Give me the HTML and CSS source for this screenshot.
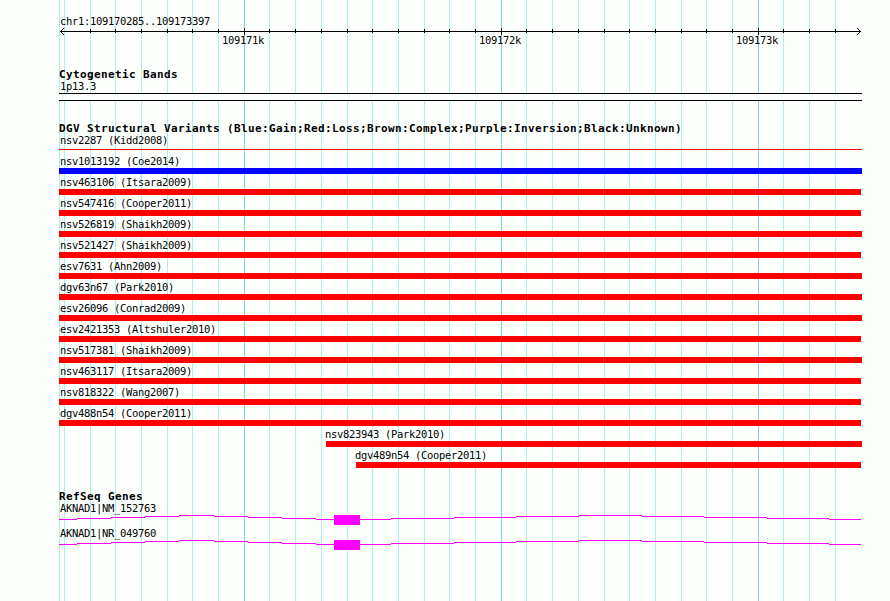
FILE: index.html
```
<!DOCTYPE html>
<html lang="en">
<head>
    <meta charset="UTF-8">
    <title>chr1:109170285..109173397</title>
    <link rel="stylesheet" href="styles.css">
</head>
<body>
    <div class="browser">
        <svg class="grid" width="890" height="601" shape-rendering="crispEdges">
            <path class="minor" d="M59.5 0v601M64.5 0v601M90.5 0v601M115.5 0v601M141.5 0v601M167.5 0v601M192.5 0v601M218.5 0v601M269.5 0v601M295.5 0v601M321.5 0v601M347.5 0v601M372.5 0v601M398.5 0v601M424.5 0v601M449.5 0v601M475.5 0v601M526.5 0v601M552.5 0v601M578.5 0v601M604.5 0v601M629.5 0v601M655.5 0v601M681.5 0v601M706.5 0v601M732.5 0v601M783.5 0v601M809.5 0v601M835.5 0v601"/>
            <path class="major" d="M244.5 0v601M501.5 0v601M758.5 0v601"/>
        </svg>

        <div class="tracks">
            <div class="ruler">
                <div class="label">chr1:109170285..109173397</div>
                <svg class="axis" width="803" height="7" viewBox="59 28 803 7" shape-rendering="crispEdges">
                    <path d="M60 31.5H861M90.5 29v4M115.5 29v4M141.5 29v4M167.5 29v4M192.5 29v4M218.5 29v4M269.5 29v4M295.5 29v4M321.5 29v4M347.5 29v4M372.5 29v4M398.5 29v4M424.5 29v4M449.5 29v4M475.5 29v4M526.5 29v4M552.5 29v4M578.5 29v4M604.5 29v4M629.5 29v4M655.5 29v4M681.5 29v4M706.5 29v4M732.5 29v4M783.5 29v4M809.5 29v4M835.5 29v4"/>
                    <path d="M244.5 28v7M501.5 28v7M758.5 28v7"/>
                    <path d="M61 30.5h1M62 29.5h1M63 28.5h1M61 32.5h1M62 33.5h1M63 34.5h1M859 30.5h1M858 29.5h1M857 28.5h1M859 32.5h1M858 33.5h1M857 34.5h1"/>
                </svg>
                <div class="ticks"><span>109171k</span><span>109172k</span><span>109173k</span></div>
            </div>

            <div class="bands">
                <h2>Cytogenetic Bands</h2>
                <div class="label">1p13.3</div>
                <div class="band"></div>
            </div>

            <div class="variants">
                <h2>DGV Structural Variants (Blue:Gain;Red:Loss;Brown:Complex;Purple:Inversion;Black:Unknown)</h2>
                <div class="row"><div class="label">nsv2287 (Kidd2008)</div><div class="bar thin"></div></div>
                <div class="row"><div class="label">nsv1013192 (Coe2014)</div><div class="bar gain"></div></div>
                <div class="row"><div class="label">nsv463106 (Itsara2009)</div><div class="bar short"></div></div>
                <div class="row"><div class="label">nsv547416 (Cooper2011)</div><div class="bar short"></div></div>
                <div class="row"><div class="label">nsv526819 (Shaikh2009)</div><div class="bar"></div></div>
                <div class="row"><div class="label">nsv521427 (Shaikh2009)</div><div class="bar short"></div></div>
                <div class="row"><div class="label">esv7631 (Ahn2009)</div><div class="bar"></div></div>
                <div class="row"><div class="label">dgv63n67 (Park2010)</div><div class="bar"></div></div>
                <div class="row"><div class="label">esv26096 (Conrad2009)</div><div class="bar"></div></div>
                <div class="row"><div class="label">esv2421353 (Altshuler2010)</div><div class="bar short"></div></div>
                <div class="row"><div class="label">nsv517381 (Shaikh2009)</div><div class="bar"></div></div>
                <div class="row"><div class="label">nsv463117 (Itsara2009)</div><div class="bar short"></div></div>
                <div class="row"><div class="label">nsv818322 (Wang2007)</div><div class="bar short"></div></div>
                <div class="row"><div class="label">dgv488n54 (Cooper2011)</div><div class="bar short"></div></div>
                <div class="row from-park"><div class="label">nsv823943 (Park2010)</div><div class="bar"></div></div>
                <div class="row from-cooper"><div class="label">dgv489n54 (Cooper2011)</div><div class="bar short"></div></div>
            </div>

            <div class="genes">
                <h2>RefSeq Genes</h2>
                <div class="gene">
                    <div class="label">AKNAD1|NM_152763</div>
                    <svg width="803" height="10" viewBox="59 0 803 10" shape-rendering="crispEdges">
                        <g id="transcript">
                            <path class="intron" d="M59 4.5H77M77 3.5H111M111 2.5H145M145 1.5H179M179 .5H214M214 1.5H248M248 2.5H282M282 3.5H316M316 4.5H334M360 4.5H391M391 3.5H454M454 2.5H516M516 1.5H579M579 .5H642M642 1.5H704M704 2.5H767M767 3.5H829M829 4.5H861"/>
                            <rect class="exon" x="334" y="0" width="26" height="10"/>
                        </g>
                    </svg>
                </div>
                <div class="gene">
                    <div class="label">AKNAD1|NR_049760</div>
                    <svg width="803" height="10" viewBox="59 0 803 10" shape-rendering="crispEdges">
                        <use href="#transcript"/>
                    </svg>
                </div>
            </div>
        </div>
    </div>
</body>
</html>
```

FILE: styles.css
```
body {
    margin: 0;
    background: #fdfffc;
    color: #000;
    font-family: "DejaVu Sans Mono", monospace;
}
.browser {
    position: relative;
    width: 890px;
    height: 601px;
    overflow: hidden;
}
/* vertical scale lines run behind every track */
.grid {
    position: absolute;
    top: 0;
    left: 0;
}
.grid path, .axis path {
    fill: none;
    stroke: #000;
}
.grid .minor {
    stroke: #afeeee;
}
.grid .major {
    stroke: #87ceeb;
}
.tracks {
    position: relative;
    width: 803px;
    padding: 15px 0 0 59px;
}
svg {
    display: block;
}
h2 {
    margin: 0;
    height: 12px;
    line-height: 14px;
    font-size: 11px;
    font-weight: bold;
    letter-spacing: 0.378px;
    white-space: nowrap;
}
.label {
    height: 13px;
    padding-left: 1px;
    line-height: 12px;
    font-size: 10.5px;
    letter-spacing: -0.321px;
    white-space: nowrap;
}
.ruler {
    height: 53px;
}
.ticks {
    display: flex;
    gap: 215px;
    padding-left: 163px;
    line-height: 10px;
    font-size: 10.5px;
    letter-spacing: -0.321px;
}
.ticks span {
    width: 42px;
}
.bands {
    height: 54px;
}
.band {
    height: 6px;
    border: solid #000;
    border-width: 1px 0;
    background: #fdfffc;
}
.variants {
    height: 368px;
}
.row {
    height: 21px;
}
.bar {
    height: 6px;
    background: #f00;
}
.bar.gain {
    background: #00f;
}
.bar.thin {
    height: 1px;
    margin-top: 2px;
}
.bar.short {
    margin-right: 1px;
}
.from-park {
    margin-left: 267px;
}
.from-cooper {
    margin-left: 297px;
}
.from-park .label, .from-cooper .label {
    padding-left: 0;
    text-indent: -1px;
}
.gene {
    height: 25px;
}
.intron {
    stroke: #f0f;
}
.exon {
    fill: #f0f;
}
```
